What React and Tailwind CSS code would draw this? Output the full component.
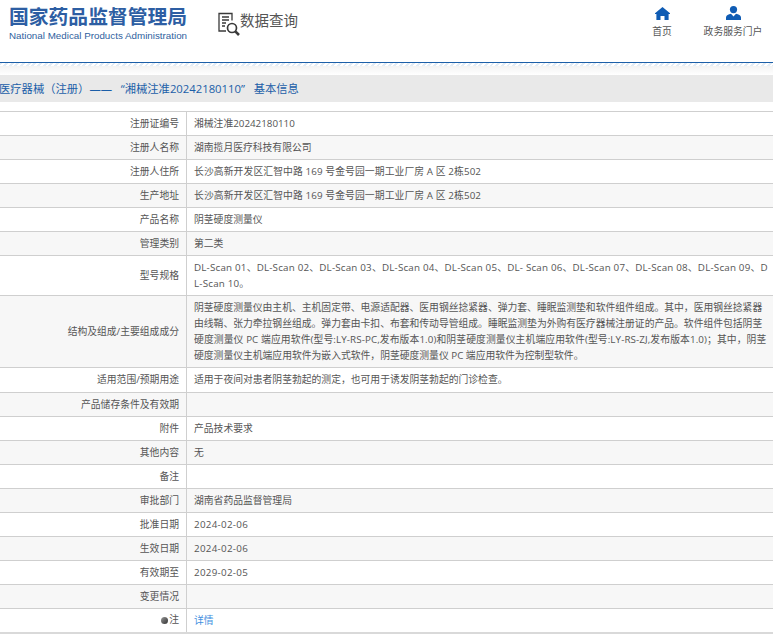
import React from "react";

const rows = [
  { label: "注册证编号", value: "湘械注准20242180110" },
  { label: "注册人名称", value: "湖南揽月医疗科技有限公司" },
  { cls: "tracking-[0.1px]", label: "注册人住所", value: "长沙高新开发区汇智中路 169 号金号园一期工业厂房 A 区 2栋502" },
  { cls: "tracking-[0.1px]", label: "生产地址", value: "长沙高新开发区汇智中路 169 号金号园一期工业厂房 A 区 2栋502" },
  { label: "产品名称", value: "阴茎硬度测量仪" },
  { label: "管理类别", value: "第二类" },
  {
    h: "h-10",
    cls: "tracking-[0.2px]",
    label: "型号规格",
    value:
      "DL-Scan 01、DL-Scan 02、DL-Scan 03、DL-Scan 04、DL-Scan 05、DL- Scan 06、DL-Scan 07、DL-Scan 08、DL-Scan 09、D\nL-Scan 10。",
  },
  {
    h: "h-[72px]",
    label: "结构及组成/主要组成成分",
    value: (
      <>
        {"阴茎硬度测量仪由主机、主机固定带、电源适配器、医用钢丝捻紧器、弹力套、睡眠监测垫和软件组件组成。其中，医用钢丝捻紧器\n由线鞘、张力牵拉钢丝组成。弹力套由卡扣、布套和传动导管组成。睡眠监测垫为外购有医疗器械注册证的产品。软件组件包括阴茎\n"}
        <span className="tracking-[0.1px]">硬度测量仪 PC 端应用软件(型号:LY-RS-PC,发布版本1.0)和阴茎硬度测量仪主机端应用软件(型号:LY-RS-ZJ,发布版本1.0)；其中，阴茎</span>
        {"\n硬度测量仪主机端应用软件为嵌入式软件，阴茎硬度测量仪 PC 端应用软件为控制型软件。"}
      </>
    ),
  },
  { h: "h-[25px]", label: "适用范围/预期用途", value: "适用于夜间对患者阴茎勃起的测定，也可用于诱发阴茎勃起的门诊检查。" },
  { label: "产品储存条件及有效期", value: "" },
  { label: "附件", value: "产品技术要求" },
  { label: "其他内容", value: "无" },
  { label: "备注", value: "" },
  { label: "审批部门", value: "湖南省药品监督管理局" },
  { cls: "tracking-[0.3px]", label: "批准日期", value: "2024-02-06" },
  { cls: "tracking-[0.3px]", label: "生效日期", value: "2024-02-06" },
  { cls: "tracking-[0.3px]", label: "有效期至", value: "2029-02-05" },
  { label: "变更情况", value: "" },
];

const SearchDocIcon = () => (
  <svg width="23" height="24" viewBox="0 0 23 24" fill="none" stroke="#3a3a3a" strokeWidth="1.3">
    <path d="M8 19H1V1.500h13v7" />
    <path d="M4 5h7M4 8h7M4 11h4M4 14h3" />
    <circle cx="14" cy="16" r="4.500" strokeWidth="1.700" />
    <path d="M17.300 19.300l3.700 3.700" strokeWidth="2.600" />
  </svg>
);

const HomeIcon = () => (
  <svg width="15" height="13" viewBox="0 0 15 13" fill="#0f5cb4">
    <path d="M7.500 0L15 6.200V7h-1.400v6H9.500V9h-4v4H1.400V7H0v-.8z" />
  </svg>
);

const UserIcon = () => (
  <svg width="15" height="14" viewBox="0 0 15 14" fill="#0f5cb4">
    <circle cx="7.500" cy="3.600" r="3.600" />
    <path d="M0 14v-2.500C0 9.500 2.500 8.300 5 7.800l2.500 2.600L10 7.800c2.500.5 5 1.700 5 3.700V14z" />
  </svg>
);

export default function App() {
  return (
    <div className="w-[773px] h-[642px] overflow-hidden bg-white text-[9.8px] text-[#555] font-['Open_Sans','Noto_Sans_CJK_SC',sans-serif]">
      <header className="h-[63px] flex border-b border-[#1c5fa8]">
        <div className="ml-[9px] w-[190px] pt-[5px]">
          <div className="text-[19.8px] leading-[24px] font-bold text-[#2d5ea3] whitespace-nowrap">国家药品监督管理局</div>
          <div className="text-[9.8px] leading-[14px] text-[#2f5f9e] font-['Liberation_Sans',sans-serif] whitespace-nowrap">
            National Medical Products Administration
          </div>
        </div>
        <div className="ml-[19px] pt-[12px] flex items-start">
          <SearchDocIcon />
          <span className="-mt-[1px] -ml-[1px] text-[14.5px] leading-[20px] text-[#555]">数据查询</span>
        </div>
        <nav className="ml-auto flex">
          <div className="w-[20px] pt-[7px] mr-[31px] flex flex-col items-center">
            <HomeIcon />
            <span className="mt-[5px] leading-[14px] whitespace-nowrap">首页</span>
          </div>
          <div className="w-[60px] pt-[6px] mr-[10px] flex flex-col items-center">
            <UserIcon />
            <span className="mt-[5px] leading-[14px] whitespace-nowrap">政务服务门户</span>
          </div>
        </nav>
      </header>

      <div className="h-[3px] bg-[repeating-linear-gradient(135deg,#e3ecf5_0,#e3ecf5_2px,#ffffff_2px,#ffffff_4px)]" />
      <div className="h-[9px] bg-gradient-to-b from-[#f3f3f3] to-white" />

      <div className="h-[27px] pt-[1px] bg-[#e9e9e9] flex items-center text-[11.3px] text-[#1b5ea8] whitespace-pre">
        <span className="-ml-[1px]">医疗器械（注册）——   “湘械注准20242180110”   基本信息</span>
      </div>

      <div className="mt-[9px] border-t border-[#cfcfcf]">
        {rows.map((row, i) => (
          <div key={row.label} className={`flex border-b border-[#cfcfcf] ${row.h || "h-6"} ${i % 2 ? "bg-[#f7f7f7]" : "bg-white"}`}>
            <div className="w-[187px] shrink-0 border-r border-[#cfcfcf] pr-[7px] pt-[1px] flex items-center justify-end">{row.label}</div>
            <div className={`flex-1 min-w-0 pl-[7px] flex items-center leading-[16px] whitespace-pre ${row.cls || ""}`}>
              <div>{row.value}</div>
            </div>
          </div>
        ))}
        <div className="flex h-[25px] bg-white border-b-2 border-[#d9d9d9]">
          <div className="w-[187px] shrink-0 border-r border-[#cfcfcf] pr-[7px] flex items-center justify-end">
            <span className="w-[7px] h-[7px] mr-[1px] rounded-full bg-gradient-to-br from-[#999] to-[#333]" />注
          </div>
          <div className="pl-[7px] pt-[1px] flex items-center text-[#3f8fe0]">详情</div>
        </div>
      </div>
    </div>
  );
}
